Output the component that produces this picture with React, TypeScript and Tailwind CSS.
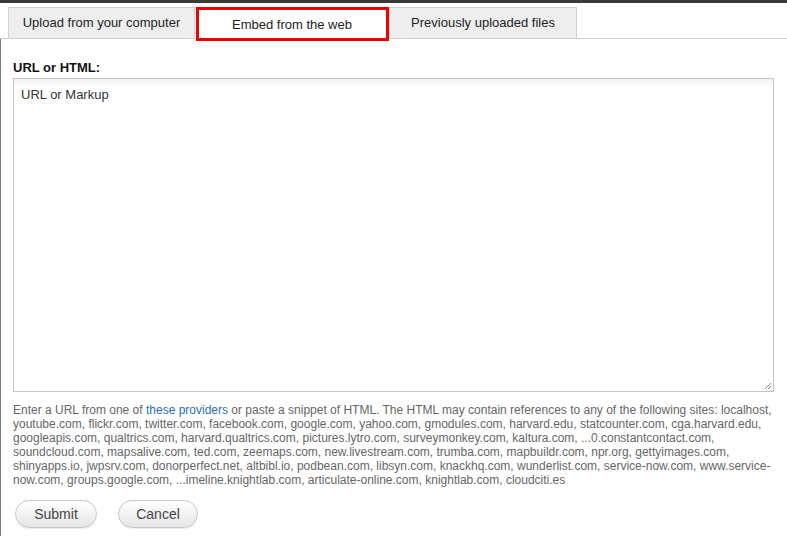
import React from "react";

const sites = [
  "youtube.com, flickr.com, twitter.com, facebook.com, google.com, yahoo.com, gmodules.com, harvard.edu, statcounter.com, cga.harvard.edu,",
  "googleapis.com, qualtrics.com, harvard.qualtrics.com, pictures.lytro.com, surveymonkey.com, kaltura.com, ...0.constantcontact.com,",
  "soundcloud.com, mapsalive.com, ted.com, zeemaps.com, new.livestream.com, trumba.com, mapbuildr.com, npr.org, gettyimages.com,",
  "shinyapps.io, jwpsrv.com, donorperfect.net, altbibl.io, podbean.com, libsyn.com, knackhq.com, wunderlist.com, service-now.com, www.service-",
  "now.com, groups.google.com, ...imeline.knightlab.com, articulate-online.com, knightlab.com, cloudciti.es",
];

const Tab = ({ label, className }: { label: string; className: string }) => (
  <div
    className={`h-[31px] flex items-center justify-center text-[13px] text-[#222] ${className}`}
  >
    {label}
  </div>
);

export default function App() {
  return (
    <div className="w-[787px] h-[536px] bg-white overflow-hidden font-['Liberation_Sans',Arial,sans-serif]">
      <div className="h-[3px] bg-[#3a3a3a]" />
      <div className="relative flex items-start pt-[4px] border-b border-[#cfcfcf] h-[36px]">
        <Tab
          label="Upload from your computer"
          className="ml-[8px] w-[187px] bg-[#eeeeee] border border-b-0 border-[#d0d0d0]"
        />
        <div className="relative w-[194px] h-[32px] bg-white flex items-center justify-center text-[13px] text-[#222] pt-[3px]">
          Embed from the web
          <div className="absolute left-[1px] right-0 top-0 h-[34px] border-[3px] border-[#ee0000]" />
        </div>
        <Tab
          label="Previously uploaded files"
          className="w-[188px] bg-[#eeeeee] border border-b-0 border-[#d0d0d0]"
        />
      </div>
      <div className="border-l border-[#7a7a7a] h-[497px] pl-[12px] pr-[13px]">
        <div className="pt-[21px] text-[13px] font-bold text-[#111] leading-[16px]">
          URL or HTML:
        </div>
        <div className="relative mt-[2px] w-[761px] h-[314px] border border-[#c4c4c4] bg-white shadow-[inset_0_6px_8px_-6px_rgba(0,0,0,0.12)]">
          <div className="pt-[7px] pl-[7px] text-[13px] text-[#333] leading-[18px]">
            URL or Markup
          </div>
          <svg className="absolute right-[1px] bottom-[1px]" width="9" height="9" viewBox="0 0 9 9">
            <path d="M8 2 L2 8 M8 5 L5 8" stroke="#888" strokeWidth="1" />
          </svg>
        </div>
        <div className="mt-[11px] text-[12px] leading-[14px] text-[#666]">
          <div className="whitespace-nowrap">
            Enter a URL from one of <span className="text-[#2c6fb7]">these providers</span> or paste a snippet of
            HTML. The HTML may contain references to any of the following sites: localhost,
          </div>
          {sites.map((s) => (
            <div key={s} className="whitespace-nowrap">
              {s}
            </div>
          ))}
        </div>
        <div className="flex gap-[21px] mt-[13px] pl-[2px]">
          <button className="w-[82px] h-[28px] rounded-full border border-[#c8c8c8] bg-gradient-to-b from-white to-[#e6e6e6] text-[14px] text-[#444] shadow-[0_1px_1px_rgba(0,0,0,0.08)]">
            Submit
          </button>
          <button className="w-[80px] h-[28px] rounded-full border border-[#c8c8c8] bg-gradient-to-b from-white to-[#e6e6e6] text-[14px] text-[#444] shadow-[0_1px_1px_rgba(0,0,0,0.08)]">
            Cancel
          </button>
        </div>
      </div>
    </div>
  );
}
